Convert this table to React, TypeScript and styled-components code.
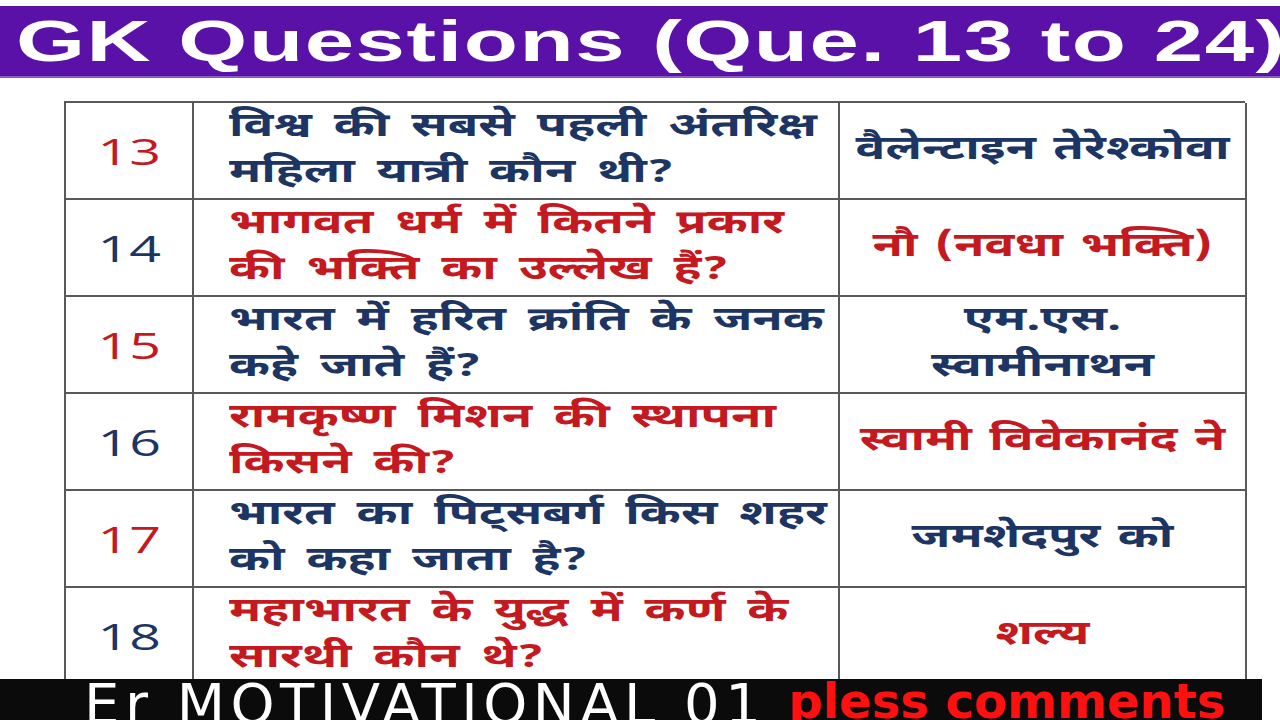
import { Fragment } from "react";
import styled, { createGlobalStyle } from "styled-components";

const GlobalStyle = createGlobalStyle`
  html, body {
    margin: 0;
    padding: 0;
    background: #ffffff;
  }
`;

type Tone = "blue" | "red";

interface QuestionRow {
  no: number;
  question: string[];
  answer: string[];
  tone: Tone;
}

const colors: Record<Tone, string> = {
  blue: "#1d3563",
  red: "#c3191f",
};

const rows: QuestionRow[] = [
  {
    no: 13,
    question: ["विश्व की सबसे पहली अंतरिक्ष", "महिला यात्री कौन थी?"],
    answer: ["वैलेन्टाइन तेरेश्कोवा"],
    tone: "blue",
  },
  {
    no: 14,
    question: ["भागवत धर्म में कितने प्रकार", "की भक्ति का उल्लेख हैं?"],
    answer: ["नौ (नवधा भक्ति)"],
    tone: "red",
  },
  {
    no: 15,
    question: ["भारत में हरित क्रांति के जनक", "कहे जाते हैं?"],
    answer: ["एम.एस.", "स्वामीनाथन"],
    tone: "blue",
  },
  {
    no: 16,
    question: ["रामकृष्ण मिशन की स्थापना", "किसने की?"],
    answer: ["स्वामी विवेकानंद ने"],
    tone: "red",
  },
  {
    no: 17,
    question: ["भारत का पिट्सबर्ग किस शहर", "को कहा जाता है?"],
    answer: ["जमशेदपुर को"],
    tone: "blue",
  },
  {
    no: 18,
    question: ["महाभारत के युद्ध में कर्ण के", "सारथी कौन थे?"],
    answer: ["शल्य"],
    tone: "red",
  },
];

const STRETCH = 1.5;

const Page = styled.div`
  position: relative;
  width: 1280px;
  height: 720px;
  overflow: hidden;
  background: #ffffff;
  display: flex;
  flex-direction: column;
`;

const TitleBar = styled.h1`
  margin: 6px 0 0;
  height: 72px;
  box-sizing: border-box;
  padding-left: 16px;
  background: #5a11a7;
  border-bottom: 2px solid #8a5cc8;
  color: #ffffff;
  font-family: "Liberation Sans", Arial, sans-serif;
  font-weight: 700;
  font-size: 58px;
  line-height: 70px;
  letter-spacing: 1px;
  white-space: nowrap;
  overflow: hidden;
`;

const TitleText = styled.span`
  display: inline-block;
  transform: scaleX(1.53);
  transform-origin: left center;
`;

const Table = styled.div`
  margin: 23px 0 0 64px;
  width: 1181px;
  display: grid;
  grid-template-columns: 128px 646px 407px;
  grid-auto-rows: 97px;
  border-top: 2px solid #595959;
  border-left: 2px solid #595959;
  box-sizing: border-box;
`;

const Cell = styled.div<{ $tone: Tone }>`
  border-right: 2px solid #595959;
  border-bottom: 2px solid #595959;
  display: flex;
  flex-direction: column;
  justify-content: center;
  color: ${(p) => colors[p.$tone]};
  font-family: "Noto Sans Devanagari", "Lohit Devanagari", "Noto Sans", sans-serif;
  font-weight: 700;
`;

const NumberCell = styled(Cell)`
  align-items: center;
  font-family: "Open Sans", "Liberation Sans", sans-serif;
  font-weight: 500;
  font-size: 37px;
`;

const QuestionCell = styled(Cell)`
  padding-left: 35px;
  font-size: 33px;
  line-height: 46px;
  word-spacing: 6px;
`;

const AnswerCell = styled(Cell)`
  text-align: center;
  font-size: 33px;
  line-height: 46px;
  word-spacing: 3px;
`;

const Line = styled.span<{ $origin: "left" | "center" }>`
  display: block;
  white-space: nowrap;
  transform: scaleX(${STRETCH});
  transform-origin: ${(p) => p.$origin} center;
`;

const Banner = styled.div`
  position: absolute;
  left: 0;
  bottom: 0;
  width: 1262px;
  height: 41px;
  background: #0b0b0b;
  display: flex;
  align-items: flex-start;
  padding-left: 84px;
  box-sizing: border-box;
  overflow: hidden;
  white-space: nowrap;
`;

const BannerName = styled.span`
  color: #ffffff;
  font-family: "DejaVu Sans", sans-serif;
  font-size: 56px;
  line-height: 62px;
  letter-spacing: 5.5px;
  margin-top: -6px;
`;

const BannerPlea = styled.span`
  margin-left: 22px;
  color: #ff1010;
  font-family: "DejaVu Sans", sans-serif;
  font-weight: 700;
  font-size: 48px;
  line-height: 62px;
  margin-top: -9px;
`;

export default function App() {
  return (
    <>
      <GlobalStyle />
      <Page>
        <TitleBar>
          <TitleText>GK Questions (Que. 13 to 24)</TitleText>
        </TitleBar>
        <Table>
          {rows.map((row) => (
            <Fragment key={row.no}>
              <NumberCell $tone={row.no % 2 ? "red" : "blue"}>
                <Line $origin="center">{row.no}</Line>
              </NumberCell>
              <QuestionCell $tone={row.tone}>
                {row.question.map((l) => (
                  <Line key={l} $origin="left">
                    {l}
                  </Line>
                ))}
              </QuestionCell>
              <AnswerCell $tone={row.tone}>
                {row.answer.map((l) => (
                  <Line key={l} $origin="center">
                    {l}
                  </Line>
                ))}
              </AnswerCell>
            </Fragment>
          ))}
        </Table>
        <Banner>
          <BannerName>Er MOTIVATIONAL 01</BannerName>
          <BannerPlea>pless comments</BannerPlea>
        </Banner>
      </Page>
    </>
  );
}
